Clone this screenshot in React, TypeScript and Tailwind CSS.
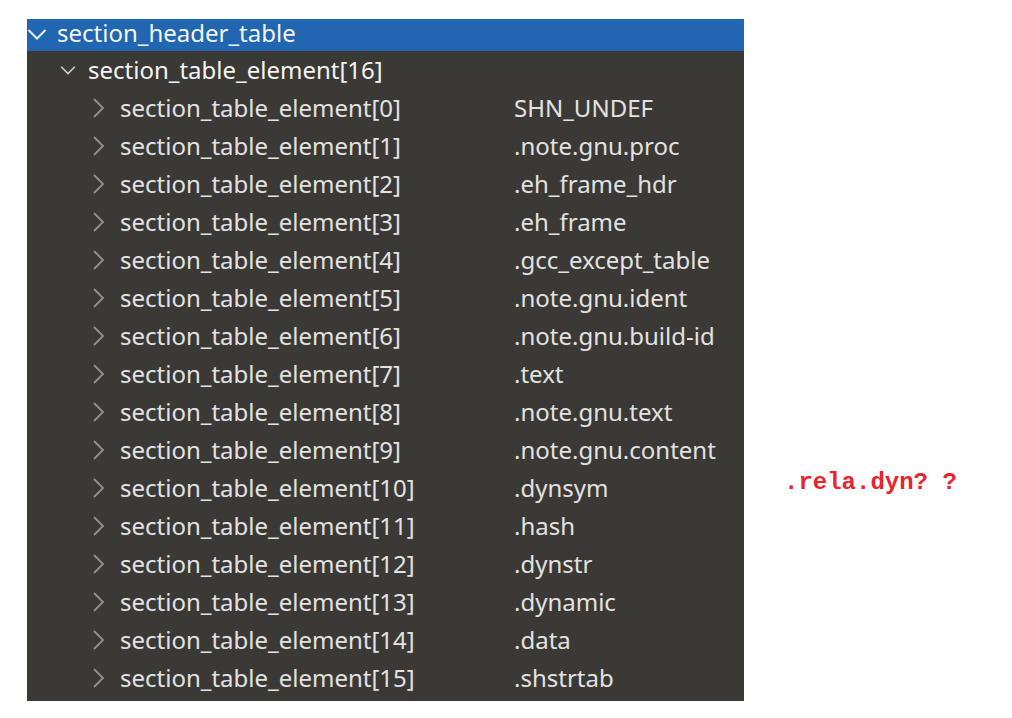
import React from 'react';

const sections = [
  'SHN_UNDEF',
  '.note.gnu.proc',
  '.eh_frame_hdr',
  '.eh_frame',
  '.gcc_except_table',
  '.note.gnu.ident',
  '.note.gnu.build-id',
  '.text',
  '.note.gnu.text',
  '.note.gnu.content',
  '.dynsym',
  '.hash',
  '.dynstr',
  '.dynamic',
  '.data',
  '.shstrtab',
];

const ChevronDown = ({ className = '' }: { className?: string }) => (
  <svg width="20" height="20" viewBox="0 0 20 20" className={className}>
    <path d="M1.5 6 L10 14.5 L18.5 6" fill="none" stroke="currentColor" strokeWidth="2" />
  </svg>
);

const ChevronRight = ({ className = '' }: { className?: string }) => (
  <svg width="20" height="20" viewBox="0 0 20 20" className={className}>
    <path d="M5 1 L14 10 L5 19" fill="none" stroke="currentColor" strokeWidth="1.9" />
  </svg>
);

export default function App() {
  return (
    <div
      className="w-[1012px] h-[718px] bg-white flex items-start pt-[19px] pl-[27px]"
      style={{ fontFamily: '"Noto Sans", "Open Sans", sans-serif' }}
    >
      <div className="w-[717px] h-[682px] bg-[#3b3935] flex flex-col">
        {/* root node, selected */}
        <div className="h-[32px] bg-[#2166b0] flex items-center text-[#f4f4f4] text-[24px] leading-none">
          <ChevronDown className="ml-0 mr-[10px] -mt-[2px] text-[#e8eef6]" />
          <span className="-mt-[4px]">section_header_table</span>
        </div>

        {/* array node */}
        <div className="h-[38px] flex items-center text-[#f4f4f4] text-[24px] leading-none">
          <ChevronDown className="ml-[33px] mr-[12px] w-[16px] text-[#cfcfcf]" />
          <span>section_table_element[16]</span>
        </div>

        {sections.map((name, i) => (
          <div key={i} className="h-[38px] flex items-center text-[24px] leading-none text-[#e2e2e2]">
            <ChevronRight className="ml-[62px] mr-[11px] text-[#8e8e8e]" />
            <span className="w-[394px]">section_table_element[{i}]</span>
            <span>{name}</span>
          </div>
        ))}
      </div>

      <div
        className="ml-[40px] mt-[446px] text-[#e8242c] text-[24px] font-bold"
        style={{ fontFamily: '"Liberation Mono", monospace' }}
      >
        .rela.dyn? ?
      </div>
    </div>
  );
}
